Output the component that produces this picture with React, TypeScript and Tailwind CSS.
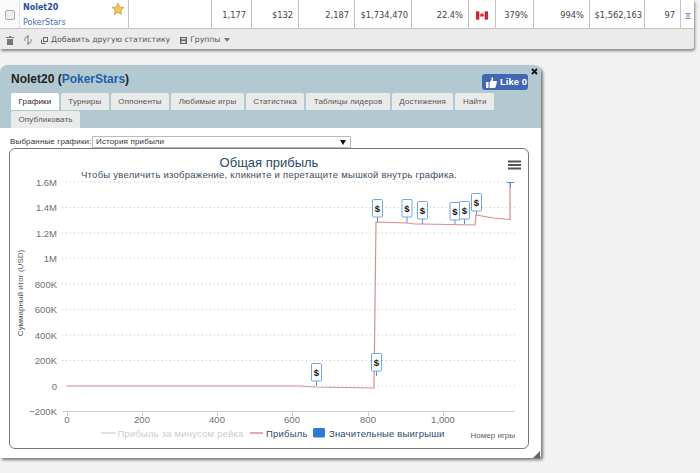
import React from 'react';

const cells = [
  { w: 'w-[83px]', text: '', align: 'text-right' },
  { w: 'w-[40px]', text: '1,177', align: 'text-right pr-[5px]' },
  { w: 'w-[47px]', text: '$132', align: 'text-right pr-[5px]' },
  { w: 'w-[56px]', text: '2,187', align: 'text-right pr-[5px]' },
  { w: 'w-[57px]', text: '$1,734,470', align: 'text-right pr-[3px]' },
  { w: 'w-[57px]', text: '22.4%', align: 'text-right pr-[5px]' },
  { w: 'w-[27px]', text: 'flag', align: 'text-center' },
  { w: 'w-[38px]', text: '379%', align: 'text-right pr-[5px]' },
  { w: 'w-[56px]', text: '994%', align: 'text-right pr-[5px]' },
  { w: 'w-[55px]', text: '$1,562,163', align: 'text-right pr-[2px]' },
  { w: 'w-[36px]', text: '97', align: 'text-right pr-[5px]' },
];

const tabs = ['Графики', 'Турниры', 'Оппоненты', 'Любимые игры', 'Статистика', 'Таблицы лидеров', 'Достижения', 'Найти', 'Опубликовать'];

const yLabels = [
  { label: '1.6M', y: 182 },
  { label: '1.4M', y: 207.5 },
  { label: '1.2M', y: 233 },
  { label: '1M', y: 258 },
  { label: '800K', y: 284 },
  { label: '600K', y: 309.5 },
  { label: '400K', y: 335 },
  { label: '200K', y: 360.5 },
  { label: '0', y: 386 },
  { label: '−200K', y: 411 },
];

const xLabels = [
  { label: '0', x: 67 },
  { label: '200', x: 142 },
  { label: '400', x: 217 },
  { label: '600', x: 292 },
  { label: '800', x: 368 },
  { label: '1,000', x: 443 },
];

const flags = [
  { x: 311, y: 363, stem: 386 },
  { x: 371, y: 353, stem: 376 },
  { x: 372, y: 199, stem: 222 },
  { x: 401.5, y: 199, stem: 223 },
  { x: 417, y: 201, stem: 224 },
  { x: 449.5, y: 202, stem: 224 },
  { x: 459, y: 201, stem: 224 },
  { x: 471, y: 193, stem: 215 },
];

function Flag() {
  return (
    <svg width="12" height="9" viewBox="0 0 13 9" className="inline-block">
      <rect width="13" height="9" fill="#f4f0f0" />
      <rect width="3.5" height="9" fill="#d9202c" />
      <rect x="9.5" width="3.5" height="9" fill="#d9202c" />
      <path d="M6.5 1.5l.8 1.5.8-.4-.3 1.8.8-.3.3.7-1 .9H5l-1-.9.3-.7.8.3-.3-1.8.8.4z" fill="#d9202c" />
    </svg>
  );
}

function Chart() {
  const font = '"Liberation Sans", Arial, sans-serif';
  return (
    <svg width="518" height="299" viewBox="10 149 518 299" className="block">
      <text x="269" y="167" textAnchor="middle" fontFamily={font} fontSize="13" fill="#274b6d">Общая прибыль</text>
      <text x="269" y="178" textAnchor="middle" fontFamily={font} fontSize="9.5" fill="#3b4e63" letterSpacing="0.25">Чтобы увеличить изображение, кликните и перетащите мышкой внутрь графика.</text>
      <path d="M508 161.5h13M508 165h13M508 168.5h13" stroke="#555" strokeWidth="2" />

      {yLabels.slice(0, 9).map((t) => (
        <line key={t.label} x1="62" x2="515" y1={t.y} y2={t.y} stroke="#c8c8c8" strokeDasharray="1 3" />
      ))}
      {yLabels.map((t) => (
        <text key={t.label} x="57" y={t.y + 3.5} textAnchor="end" fontFamily={font} fontSize="9.5" fill="#707070">{t.label}</text>
      ))}
      <text transform="translate(23 293) rotate(-90)" textAnchor="middle" fontFamily={font} fontSize="8" fill="#555">Суммарный итог (USD)</text>

      <line x1="62" x2="515" y1="411.5" y2="411.5" stroke="#c0d0e0" />
      {xLabels.map((t) => (
        <g key={t.label}>
          <line x1={t.x + 0.5} x2={t.x + 0.5} y1="411" y2="416" stroke="#c0d0e0" />
          <text x={t.x} y="423" textAnchor="middle" fontFamily={font} fontSize="9.5" fill="#707070">{t.label}</text>
        </g>
      ))}

      <path d="M67 386L300 386L315 387L374 388L376 222L407 223L415 224L422 224L475 225L476 215L493 218L510 219.5L510 183" fill="none" stroke="#d98e8e" strokeWidth="1.2" />
      <path d="M507 182.5h7M510.5 182.5v5" stroke="#4a8fd8" fill="none" />

      {flags.map((f) => (
        <g key={f.x}>
          <line x1={f.x + 5.5} x2={f.x + 5.5} y1={f.y + 18} y2={f.stem} stroke="#5b97dc" />
          <rect x={f.x + 0.5} y={f.y + 0.5} width="10" height="17.5" rx="1" fill="#fff" stroke="#6fa8e8" />
          <text x={f.x + 5.5} y={f.y + 12.5} textAnchor="middle" fontFamily={font} fontWeight="700" fontSize="9.5" fill="#111">$</text>
        </g>
      ))}

      <line x1="101" x2="116" y1="433" y2="433" stroke="#d8d8d8" strokeWidth="1.5" />
      <text x="117.5" y="436.5" fontFamily={font} fontSize="9.5" fill="#cccccc" letterSpacing="0.18">Прибыль за минусом рейка</text>
      <line x1="250" x2="263" y1="433" y2="433" stroke="#d98e8e" strokeWidth="1.5" />
      <text x="266" y="436.5" fontFamily={font} fontSize="9.5" fill="#274b6d" letterSpacing="0.2">Прибыль</text>
      <rect x="313" y="428" width="12" height="9.5" rx="1.5" fill="#2e7bd6" />
      <text x="329" y="436.5" fontFamily={font} fontSize="9.5" fill="#274b6d" letterSpacing="0.18">Значительные выигрыши</text>
      <text x="515" y="438" textAnchor="end" fontFamily={font} fontSize="8" fill="#606060">Номер игры</text>
    </svg>
  );
}

export default function App() {
  return (
    <div className="w-[700px] h-[473px] overflow-hidden bg-[#f2f2f2] font-['DejaVu_Sans',sans-serif] text-[8.3px] text-[#444]">
      {/* Table row + toolbar */}
      <div className="w-[694px] h-[49px] bg-[#ebebeb] rounded-br-[3px] shadow-[1px_2px_3px_rgba(0,0,0,0.45)]">
        <div className="flex h-[29px] bg-white border-b border-[#c4c4c4]">
          <div className="w-[20px] border-r border-[#e0e0e0] flex items-center justify-center bg-[#fafafa]">
            <div className="w-[10px] h-[10px] mt-[2px] border border-[#aaa] rounded-[2px] bg-[#eee]" />
          </div>
          <div className="w-[109px] border-r border-[#c4c4c4] pl-[3px] pt-[1px] relative text-[8px]">
            <div className="font-bold text-[#2a4f9a] leading-[14px]">Nolet20</div>
            <div className="text-[#4a6fb5] mt-[1px] leading-[13px]">PokerStars</div>
            <svg width="14" height="14" viewBox="0 0 24 24" className="absolute left-[91px] top-[2px]">
              <path d="M12 2l3 6.6 7.2.8-5.4 4.8 1.5 7.1L12 17.7l-6.3 3.6 1.5-7.1L1.8 9.4 9 8.6z" fill="#f7c948" stroke="#b9a46a" strokeWidth="1.5" />
            </svg>
          </div>
          {cells.map((c, i) => (
            <div key={i} className={`${c.w} ${c.align} border-r border-[#c4c4c4] leading-[30px] whitespace-nowrap`}>
              {c.text === 'flag' ? <Flag /> : c.text}
            </div>
          ))}
          <div className="flex-1 flex items-center justify-center pt-[4px]">
            <svg width="6" height="6" viewBox="0 0 6 6">
              <path d="M0.5 0.5h5M1 1l4 3.5M5 1L1 4.5M0.5 5.5h5" stroke="#5d8ad0" strokeWidth="0.9" />
            </svg>
          </div>
        </div>
        <div className="flex items-center h-[20px] pt-[2px] pl-[6px] text-[#555] text-[7.7px]">
          <svg width="8" height="9" viewBox="0 0 8 9">
            <path d="M0 1h8v1H0zM3 0h2v1H3zM1 3h6v6H1z" fill="#777" />
          </svg>
          <svg width="8" height="10" viewBox="0 0 8 10" className="ml-[10px]" fill="none" stroke="#777">
            <path d="M1 6a3 3 0 0 1 4-4M7 4a3 3 0 0 1-4 4M4 0v10" strokeWidth="0.9" />
          </svg>
          <svg width="7" height="7" viewBox="0 0 7 7" className="ml-[9px]" fill="none" stroke="#666">
            <rect x="2.5" y="0.5" width="4" height="4" />
            <path d="M0.5 2.5v4h4" />
          </svg>
          <span className="ml-[3px] whitespace-nowrap">Добавить другую статистику</span>
          <svg width="7" height="7" viewBox="0 0 7 7" className="ml-[10px]">
            <path d="M0 0h7v7H0z" fill="#666" />
            <path d="M1.5 1h4v1.5h-4zM1.5 4h4v2h-4z" fill="#ddd" />
          </svg>
          <span className="ml-[3px]">Группы</span>
          <div className="ml-[4px] border-x-[3px] border-x-transparent border-t-[4px] border-t-[#777]" />
        </div>
      </div>

      {/* Player dialog */}
      <div className="relative w-[541px] h-[393px] mt-[16px] bg-white rounded-t-[7px] rounded-br-[3px] shadow-[2px_2px_3px_rgba(0,0,0,0.5)]">
        <div className="h-[63px] bg-[#b3c9d1] rounded-t-[7px] pl-[11px] pr-[13px] pt-[7px] relative">
          <div className="flex justify-between items-start h-[21px]">
            <div className="font-['Liberation_Sans',sans-serif] font-bold text-[12px] leading-[14px] text-[#222]">
              Nolet20 (<span className="text-[#1f5fa8]">PokerStars</span>)
            </div>
            <div className="flex items-center gap-[3px] h-[16px] w-[46px] mt-[2px] pl-[4px] bg-[#4267b2] rounded-[3px] text-white font-['Liberation_Sans',sans-serif] font-bold text-[9.5px] whitespace-nowrap">
              <svg width="11" height="11" viewBox="0 0 11 11" fill="#fff" className="shrink-0">
                <path d="M0 5h2.5v6H0zM3.5 5.2L5.5 3V0.3c1-.3 1.8.5 1.6 1.8L6.8 4H10c.8 0 1.1.7.9 1.3L9.6 10c-.1.5-.5 1-1.2 1H3.5z" />
              </svg>
              <span>Like 0</span>
            </div>
          </div>
          <div className="flex flex-wrap gap-x-[2px] gap-y-[1px] w-[490px]">
            {tabs.map((t, i) => (
              <div
                key={t}
                className={`h-[17px] leading-[17px] px-[7.5px] rounded-t-[2px] font-['Liberation_Sans',sans-serif] text-[8px] tracking-[0.15px] whitespace-nowrap ${i === 0 ? 'bg-white text-[#222]' : 'bg-[#e9ebeb] text-[#555]'}`}
              >
                {t}
              </div>
            ))}
          </div>
        </div>

        {/* Close overlay */}
        <svg width="7" height="7" viewBox="0 0 7 7" className="absolute left-[531px] top-[3px]">
          <path d="M1 1l5 5M6 1L1 6" stroke="#111" strokeWidth="1.8" />
        </svg>

        <div className="pl-[9px] pt-[8px]">
          <div className="flex items-center h-[12px] font-['Liberation_Sans',sans-serif] text-[8px] tracking-[0.15px] text-[#333]">
            <span className="w-[83px] pl-[1px] whitespace-nowrap">Выбранные графики:</span>
            <div className="flex items-center justify-between w-[259px] h-[12px] border border-[#bbb] bg-white pl-[3px] pr-[4px] text-[#333]">
              <span>История прибыли</span>
              <div className="border-x-[3px] border-x-transparent border-t-[5px] border-t-[#111]" />
            </div>
          </div>
          <div className="w-[520px] h-[301px] border border-[#777] rounded-[6px] overflow-hidden bg-white">
            <Chart />
          </div>
        </div>

        {/* Resize grip */}
        <svg width="7" height="7" viewBox="0 0 7 7" className="absolute right-[1px] bottom-[0px]">
          <path d="M7 0v7H0z" fill="#666" />
        </svg>
      </div>
    </div>
  );
}
